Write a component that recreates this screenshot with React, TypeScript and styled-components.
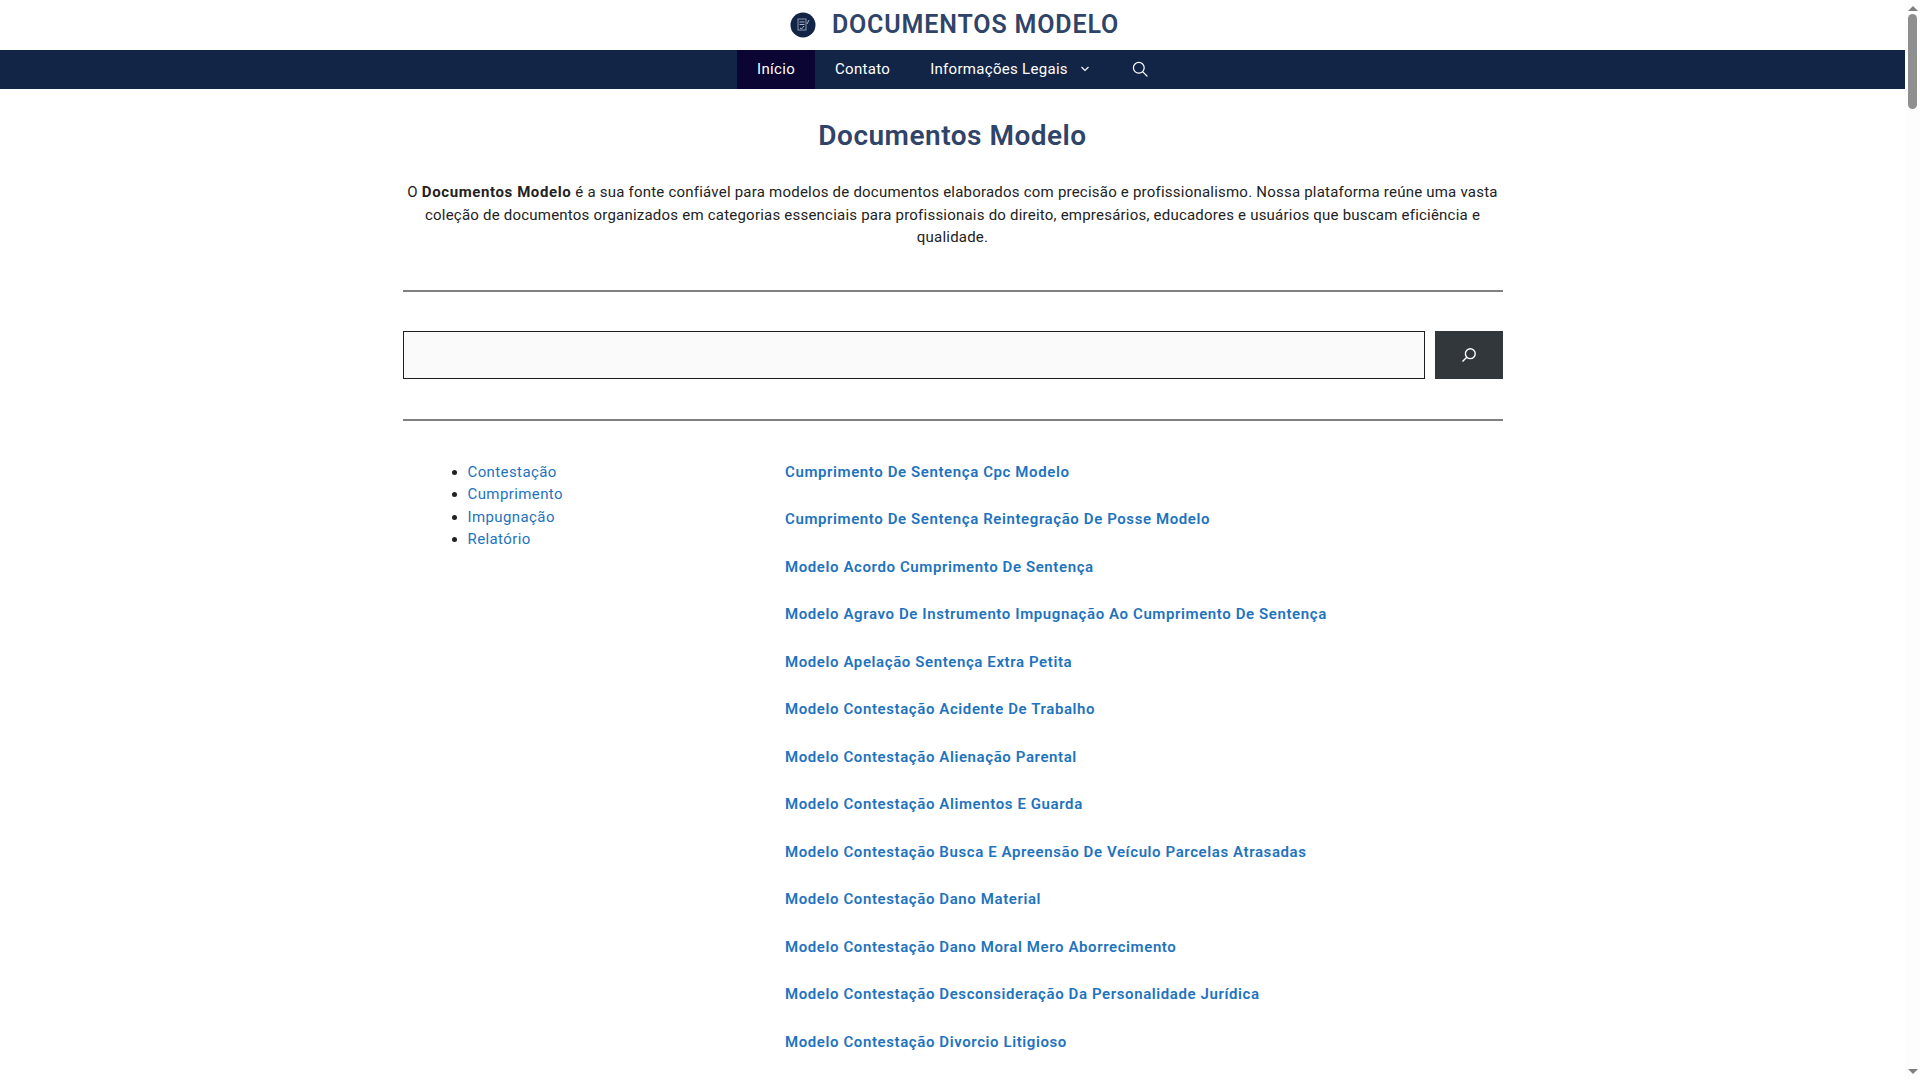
import styled, { createGlobalStyle } from 'styled-components';

const GlobalStyle = createGlobalStyle`
  html, body {
    margin: 0;
    height: 100%;
    overflow: hidden;
    background: #fff;
  }
  body {
    font-family: Roboto, "Liberation Sans", sans-serif;
    font-size: 15px;
    line-height: 1.5;
    color: #222;
  }
  * {
    box-sizing: border-box;
  }
`;

const Window = styled.div`
  display: flex;
  height: 100vh;
  overflow: hidden;
`;

const Page = styled.div`
  flex: 1;
  min-width: 0;
`;

const Masthead = styled.header`
  height: 50px;
  display: flex;
  align-items: center;
  justify-content: center;
  gap: 16px;
  padding-left: 4px;
`;

const SiteTitle = styled.a`
  font-size: 25px;
  font-weight: 600;
  color: #2f4468;
  text-transform: uppercase;
  letter-spacing: 0.85px;
`;

const NavBar = styled.nav`
  height: 39px;
  background: #132547;
  display: flex;
  justify-content: center;
  padding-left: 2px;
`;

const NavItem = styled.a<{ $active?: boolean }>`
  display: flex;
  align-items: center;
  gap: 12px;
  padding: 0 20px;
  color: #fff;
  font-size: 15px;
  letter-spacing: 0.3px;
  background: ${(p) => (p.$active ? '#0a0533' : 'transparent')};

  svg {
    margin-right: 2px;
    margin-bottom: 1px;
  }
`;

const Content = styled.main`
  width: 1100px;
  margin: 0 auto;
  padding-top: 30px;
`;

const Heading = styled.h1`
  margin: 0;
  text-align: center;
  font-size: 28px;
  font-weight: 600;
  line-height: 34px;
  color: #2f4468;
  letter-spacing: 0.5px;
`;

const Intro = styled.p`
  margin: 28px 0 0;
  text-align: center;
  letter-spacing: 0.22px;

  strong {
    letter-spacing: 0.6px;
  }
`;

const Divider = styled.hr<{ $top: number }>`
  margin: ${(p) => p.$top}px 0 0;
  border: 0;
  height: 2px;
  background: #808080;
`;

const SearchRow = styled.form`
  display: flex;
  gap: 10px;
  margin-top: 39px;
`;

const SearchInput = styled.input`
  flex: 1;
  height: 48px;
  background: #fafafa;
  border: 1px solid #1e1e1e;
  padding: 0 12px;
`;

const SearchButton = styled.button`
  width: 68px;
  height: 48px;
  display: flex;
  align-items: center;
  justify-content: center;
  background: #32373c;
  border: 0;
`;

const Columns = styled.div`
  display: grid;
  grid-template-columns: 382.5px 1fr;
  margin-top: 40px;
`;

const CategoryList = styled.ul`
  margin: 0;
  padding: 0 0 0 65px;
`;

const CategoryItem = styled.li`
  font-size: 15px;
`;

const CategoryLink = styled.a`
  color: #1e73be;
  letter-spacing: 0.4px;
`;

const DocList = styled.div`
  display: flex;
  flex-direction: column;
  gap: 25.1px;
`;

const DocLink = styled.a`
  font-weight: 600;
  color: #1e73be;
  line-height: 22.4px;
  letter-spacing: 0.6px;
`;

const Scrollbar = styled.aside`
  width: 15px;
  flex: none;
  height: 100%;
  background: #fdfdfd;
  display: flex;
  flex-direction: column;
  align-items: center;
  justify-content: space-between;
  padding: 6px 0;
`;

const ScrollTop = styled.div`
  display: flex;
  flex-direction: column;
  align-items: center;
  gap: 3px;
`;

const Arrow = styled.div<{ $down?: boolean }>`
  width: 0;
  height: 0;
  border-left: 5px solid transparent;
  border-right: 5px solid transparent;
  ${(p) => (p.$down ? 'border-top: 5px solid #7f7f7f;' : 'border-bottom: 5px solid #7f7f7f;')}
`;

const Thumb = styled.div`
  width: 9px;
  height: 95px;
  border-radius: 5px;
  background: #8f8f8f;
`;

const Logo = () => (
  <svg width="26" height="26" viewBox="0 0 26 26" aria-hidden="true">
    <circle cx="13" cy="13" r="12.5" fill="#132547" />
    <rect x="8" y="7" width="8" height="11" fill="none" stroke="#8d97ab" strokeWidth="1" />
    <path d="M9.5 10h5M9.5 12.5h5M10 16l1.5 1 2.5-3M17 12l2-4" fill="none" stroke="#aab2c2" strokeWidth="1" />
  </svg>
);

const NavSearchIcon = () => (
  <svg width="16" height="16" viewBox="0 0 16 16" fill="none" stroke="#fff" strokeWidth="1.2" aria-hidden="true">
    <circle cx="6.8" cy="6.8" r="5.4" />
    <path d="M10.8 10.8 15 15" strokeLinecap="round" />
  </svg>
);

const Chevron = () => (
  <svg width="10" height="6" viewBox="0 0 10 6" fill="none" stroke="#fff" strokeWidth="1.1" aria-hidden="true">
    <path d="M1.5 1 5 4.5 8.500 1" />
  </svg>
);

const ButtonSearchIcon = () => (
  <svg width="16" height="16" viewBox="0 0 16 16" fill="none" stroke="#fff" strokeWidth="1.4" aria-hidden="true">
    <circle cx="9.300" cy="6.700" r="4.900" />
    <path d="M5.800 10.200 1.500 14.500" />
  </svg>
);

const categories = ['Contestação', 'Cumprimento', 'Impugnação', 'Relatório'];

const documents = [
  'Cumprimento De Sentença Cpc Modelo',
  'Cumprimento De Sentença Reintegração De Posse Modelo',
  'Modelo Acordo Cumprimento De Sentença',
  'Modelo Agravo De Instrumento Impugnação Ao Cumprimento De Sentença',
  'Modelo Apelação Sentença Extra Petita',
  'Modelo Contestação Acidente De Trabalho',
  'Modelo Contestação Alienação Parental',
  'Modelo Contestação Alimentos E Guarda',
  'Modelo Contestação Busca E Apreensão De Veículo Parcelas Atrasadas',
  'Modelo Contestação Dano Material',
  'Modelo Contestação Dano Moral Mero Aborrecimento',
  'Modelo Contestação Desconsideração Da Personalidade Jurídica',
  'Modelo Contestação Divorcio Litigioso',
];

const App: React.FC = () => {
  return (
    <Window>
      <GlobalStyle />
      <Page>
        <Masthead>
          <Logo />
          <SiteTitle>Documentos Modelo</SiteTitle>
        </Masthead>
        <NavBar>
          <NavItem $active>Início</NavItem>
          <NavItem>Contato</NavItem>
          <NavItem>
            Informações Legais
            <Chevron />
          </NavItem>
          <NavItem>
            <NavSearchIcon />
          </NavItem>
        </NavBar>
        <Content>
          <Heading>Documentos Modelo</Heading>
          <Intro>
            O <strong>Documentos Modelo</strong> é a sua fonte confiável para modelos de documentos elaborados com
            precisão e profissionalismo. Nossa plataforma reúne uma vasta coleção de documentos organizados em
            categorias essenciais para profissionais do direito, empresários, educadores e usuários que buscam
            eficiência e qualidade.
          </Intro>
          <Divider $top={41} />
          <SearchRow>
            <SearchInput aria-label="Pesquisar" />
            <SearchButton aria-label="Pesquisar">
              <ButtonSearchIcon />
            </SearchButton>
          </SearchRow>
          <Divider $top={40} />
          <Columns>
            <CategoryList>
              {categories.map((name) => (
                <CategoryItem key={name}>
                  <CategoryLink>{name}</CategoryLink>
                </CategoryItem>
              ))}
            </CategoryList>
            <DocList>
              {documents.map((name) => (
                <DocLink key={name}>{name}</DocLink>
              ))}
            </DocList>
          </Columns>
        </Content>
      </Page>
      <Scrollbar>
        <ScrollTop>
          <Arrow />
          <Thumb />
        </ScrollTop>
        <Arrow $down />
      </Scrollbar>
    </Window>
  );
};

export default App;
